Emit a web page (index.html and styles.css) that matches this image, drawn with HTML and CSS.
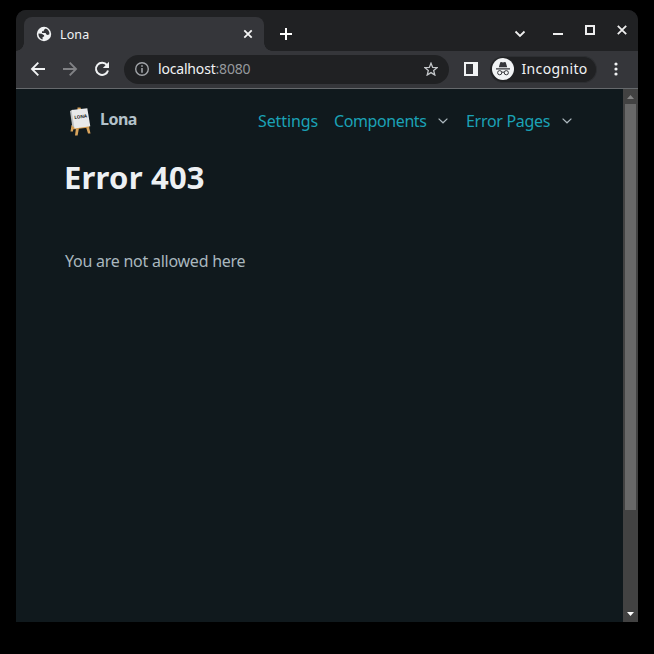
FILE: index.html
```html
<!DOCTYPE html>
<html lang="en">
<head>
<meta charset="utf-8">
<title>Lona</title>
<link rel="stylesheet" href="styles.css">
</head>
<body>
<div class="window">
  <div class="tabstrip">
    <div class="tab">
      <svg class="globe" width="16" height="16" viewBox="0 0 16 16"><circle cx="8" cy="8" r="7.2" fill="#f1f3f4"/><path d="M9.6 2.4 7.8 3.9v1.4H6v1.6h3.6l.8 1.6 1.4.6 1.6-.9c.3-2.700-1.200-5.100-3.800-5.800zM2.500 7.500l3.300.2 2.300 1.500v1.300l-1.500.6v2.400C4 12.900 2.200 10.300 2.500 7.500z" fill="#35363a"/></svg>
      <span class="tab-title">Lona</span>
      <svg class="tab-close" width="10" height="10" viewBox="0 0 10 10"><path d="m1.3 1.3 7.4 7.4m0-7.4L1.3 8.700" stroke="#f5f5f5" stroke-width="1.8"/></svg>
    </div>
    <svg class="plus" width="12" height="12" viewBox="0 0 12 12"><path d="M6 0v12M0 6h12" stroke="#fff" stroke-width="2"/></svg>
    <div class="controls">
      <svg class="search-tabs" width="12" height="8" viewBox="0 0 12 8"><path d="m1.5 1.5 4.500 4.500 4.500-4.500" fill="none" stroke="#eee" stroke-width="1.8"/></svg>
      <svg class="minimize" width="10" height="2" viewBox="0 0 10 2"><path d="M0 1h10" stroke="#eee" stroke-width="2"/></svg>
      <svg class="maximize" width="10" height="10" viewBox="0 0 10 10"><path d="M1 1h8v8H1z" fill="none" stroke="#eee" stroke-width="2"/></svg>
      <svg class="close" width="10" height="10" viewBox="0 0 10 10"><path d="m.8.8 8.4 8.4m0-8.4L.8 9.2" stroke="#eee" stroke-width="1.8"/></svg>
    </div>
  </div>
  <div class="toolbar">
    <svg class="back" width="16" height="16" viewBox="0 0 16 16"><path d="M15 8H2.500M8.300 1.700 2 8l6.300 6.300" fill="none" stroke="#f1f3f4" stroke-width="1.9"/></svg>
    <svg class="forward" width="16" height="16" viewBox="0 0 16 16"><path d="M1 8h12.500M7.700 1.700 14 8l-6.300 6.300" fill="none" stroke="#818285" stroke-width="1.9"/></svg>
    <svg class="reload" width="16" height="16" viewBox="0 0 16 16"><path d="M13 4.200A6.100 6.100 0 1 0 14 9.400" fill="none" stroke="#f1f3f4" stroke-width="2"/><path d="M15 .8v6.300H8.800z" fill="#f1f3f4"/></svg>
    <div class="omnibox">
      <svg class="info" width="14" height="14" viewBox="0 0 14 14"><circle cx="7" cy="7" r="6.300" fill="none" stroke="#a1a4a8" stroke-width="1.400"/><path d="M7 3.200v1.600M7 6v4.700" stroke="#a1a4a8" stroke-width="1.600"/></svg>
      <span class="url">localhost<span class="port">:8080</span></span>
      <svg class="star" width="14" height="14" viewBox="0 0 14 14"><path d="m7 1.200 1.700 4.200 4.400.3-3.400 2.900 1.100 4.400L7 10.600 3.200 13l1.100-4.400L.9 5.700l4.400-.3z" fill="none" stroke="#c4c7ca" stroke-width="1.300"/></svg>
    </div>
    <svg class="sidepanel" width="14" height="14" viewBox="0 0 14 14"><path d="M1 1h12v12H1z" fill="none" stroke="#f1f3f4" stroke-width="2"/><path d="M9 1h4v12H9z" fill="#f1f3f4"/></svg>
    <div class="profile">
      <svg width="22" height="22" viewBox="0 0 22 22"><circle cx="11" cy="11" r="11" fill="#f1f3f4"/><path d="M6.800 9.200 8.200 4.400q.3-.6.9-.5l1.900.5 1.900-.5q.6-.1.9.5l1.400 4.800z" fill="#35363a"/><path d="M4 10.900h14" stroke="#35363a" stroke-width="1.200"/><circle cx="7.700" cy="14.700" r="2.100" fill="none" stroke="#35363a"/><circle cx="14.300" cy="14.700" r="2.100" fill="none" stroke="#35363a"/><path d="M9.700 14.400q1.300-.8 2.600 0" fill="none" stroke="#35363a"/></svg>
      <span class="incognito">Incognito</span>
    </div>
    <svg class="menu" width="4" height="14" viewBox="0 0 4 14" fill="#f1f3f4"><circle cx="2" cy="2" r="1.600"/><circle cx="2" cy="7" r="1.600"/><circle cx="2" cy="12" r="1.600"/></svg>
  </div>
  <div class="viewport">
    <main class="page">
      <header>
        <svg class="logo" width="24" height="32" viewBox="0 0 24 32"><path d="M8.500 2.500h3l1 3h-4zM2.500 20l2 .5-.5 6H1.500zM7 23h3L8.600 30.500H6zM17 22h3l1.500 6.500H19z" fill="#d9a45c"/><path d="m3 22 17-2 .5 2.500-17 2z" fill="#d39b50"/><path d="m1 6 3-1.300L7 23.500 3.200 21z" fill="#bfc1c3"/><path d="m2.500 5 15.800-1.700 3 18L5.500 23.500z" fill="#e9e9ea"/><text class="logo-text" x="5.500" y="14" transform="rotate(-7 5.500 14)">LONA</text></svg>
        <strong class="brand">Lona</strong>
        <nav>
          <a class="settings">Settings</a>
          <a class="components">Components</a>
          <svg class="chevron" width="10" height="6" viewBox="0 0 10 6"><path d="m.6.6 4.400 4.200L9.400.6" fill="none" stroke="#aab6bc" stroke-width="1.200"/></svg>
          <a class="errors">Error Pages</a>
          <svg class="chevron" width="10" height="6" viewBox="0 0 10 6"><path d="m.6.6 4.400 4.200L9.400.6" fill="none" stroke="#aab6bc" stroke-width="1.200"/></svg>
        </nav>
      </header>
      <h1>Error 403</h1>
      <p>You are not allowed here</p>
    </main>
    <div class="scrollbar">
      <svg width="15" height="15" viewBox="0 0 15 15"><path d="M4 10h7L7.500 6z" fill="#858585"/></svg>
      <div class="thumb"></div>
      <svg class="down" width="15" height="15" viewBox="0 0 15 15"><path d="M4 5h7L7.500 9z" fill="#fff"/></svg>
    </div>
  </div>
</div>
</body>
</html>
```
FILE: styles.css
```css
* { box-sizing: border-box; }
body { margin: 0; height: 654px; padding: 10px 16px; background: #000; overflow: hidden; font-family: "Noto Sans", sans-serif; white-space: nowrap; }
svg { display: block; flex: none; }
.window { width: 622px; height: 612px; border-radius: 10px 10px 0 0; overflow: hidden; background: #202124; }
.tabstrip { height: 41px; display: flex; padding: 7px 0 0; background: linear-gradient(#35363a, #35363a) left bottom / 10px 8px no-repeat, #202123; }
.tab { width: 240px; height: 34px; margin-left: 8px; padding: 0 11px 0 12px; display: flex; align-items: center; background: #35363a; border-radius: 8px 8px 0 0; color: #f1f3f4; font-size: 12.5px; position: relative; }
.tab::before, .tab::after { content: ""; position: absolute; bottom: 0; width: 8px; height: 8px; }
.tab::before { left: -8px; background: radial-gradient(circle at 0 0, #202123 7.5px, #35363a 8px); }
.tab::after { right: -8px; background: radial-gradient(circle at 100% 0, #202123 7.5px, #35363a 8px); }
.tab-title { margin-left: 8px; letter-spacing: .1px; }
.tab-close { margin-left: auto; }
.plus { margin: 11px 0 0 16px; }
.controls { display: flex; align-items: flex-start; margin-left: auto; padding-right: 11px; }
.search-tabs { margin: 13px 27px 0 0; }
.minimize { margin: 16px 22px 0 0; }
.maximize { margin: 8px 22px 0 0; }
.close { margin-top: 8px; }
.toolbar { height: 38px; display: flex; align-items: center; padding: 0 20px 2px 14px; background: #35363a; }
.forward, .reload { margin-left: 16px; }
.omnibox { width: 325px; height: 29px; margin-left: 14px; padding: 0 11px; border-radius: 15px; display: flex; align-items: center; background: #202123; color: #f1f3f4; font-size: 14px; }
.url { margin: -1px 0 0 9px; letter-spacing: -.18px; }
.port { color: #96999d; }
.star { margin-left: auto; }
.sidepanel { margin-left: 15px; }
.profile { width: 107px; height: 27px; margin-left: 12px; padding-left: 2px; border: 1px solid #2d2f32; border-left: 0; border-radius: 14px; display: flex; align-items: center; background: #202123; color: #f1f3f4; font-size: 14px; }
.incognito { margin: -1px 0 0 7.5px; letter-spacing: .35px; }
.menu { margin-left: auto; }
.viewport { height: 533px; display: flex; background: #10191d; box-shadow: 0 -1px #66696c; }
.page { width: 607px; padding-left: 49px; color: #a9b7bf; font-size: 16px; }
header { height: 60px; display: flex; align-items: flex-start; padding: 16px 0 0 4px; }
.logo-text { font: bold 4.5px "Noto Sans", sans-serif; fill: #222; }
.brand { width: 62px; margin: 2px 0 0 7px; line-height: 24px; letter-spacing: -.5px; color: #b4c2ca; }
nav { display: flex; align-items: center; height: 24px; margin: 4px 0 0 96px; color: #1ba2b6; }
.settings { width: 76px; letter-spacing: -.1px; }
.components { width: 104px; letter-spacing: -.4px; }
.errors { width: 95px; margin-left: 18px; letter-spacing: -.3px; }
.errors + .chevron { margin-left: 1px; }
h1 { margin: 4px 0 0 -1px; font-size: 31px; line-height: 48px; color: #edf0f3; letter-spacing: .2px; }
p { margin: 48px 0 0; line-height: 24px; letter-spacing: -.25px; }
.scrollbar { width: 15px; display: flex; flex-direction: column; background: #424242; }
.thumb { width: 11px; height: 406px; margin-left: 2px; background: #686868; }
.down { margin-top: auto; }
```
